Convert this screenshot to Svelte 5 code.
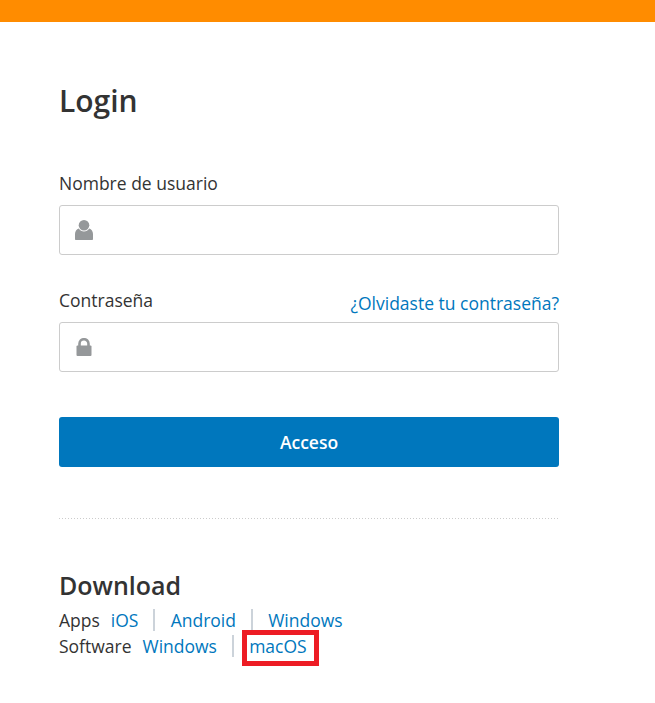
<script lang="ts">
  const apps = ["iOS", "Android", "Windows"];
  const software = ["Windows", "macOS"];
</script>

<div class="topbar"></div>

<main class="page">
  <h1>Login</h1>

  <form class="form" on:submit|preventDefault>
    <div class="field">
      <div class="label-row">
        <label for="user">Nombre de usuario</label>
      </div>
      <div class="input-wrap">
        <svg class="icon" viewBox="0 0 18 20" width="18" height="20" aria-hidden="true">
          <circle cx="9" cy="5.300" r="5.300" fill="#95989a" />
          <path d="M1 20c-.6 0-1-.4-1-1v-5c0-2.600 1.500-4.700 3.800-5.500C5 10.400 6.800 11.400 9 11.400s4-1 5.200-2.900c2.300.8 3.800 2.900 3.800 5.500v5c0 .6-.4 1-1 1z" fill="#95989a" />
        </svg>
        <input id="user" type="text" />
      </div>
    </div>

    <div class="field second">
      <div class="label-row">
        <label for="pass">Contraseña</label>
        <a href="#forgot" class="forgot">¿Olvidaste tu contraseña?</a>
      </div>
      <div class="input-wrap">
        <svg class="icon lock" viewBox="0 0 16 18" width="16" height="18" aria-hidden="true">
          <path d="M3.500 8V5.700a4.500 4.500 0 0 1 9 0V8" fill="none" stroke="#95989a" stroke-width="2.600" />
          <rect x="0.500" y="7.500" width="15" height="10.500" rx="1" fill="#95989a" />
        </svg>
        <input id="pass" type="password" />
      </div>
    </div>

    <button type="submit">Acceso</button>
  </form>

  <hr />

  <section class="download">
    <h2>Download</h2>
    <div class="links">
      <span class="kind">Apps</span>
      {#each apps as app, i}
        {#if i > 0}<span class="sep"></span>{/if}
        <a href="#app">{app}</a>
      {/each}
    </div>
    <div class="links">
      <span class="kind">Software</span>
      {#each software as item, i}
        {#if i > 0}<span class="sep"></span>{/if}
        <a href="#software" class:marked={item === "macOS"}>{item}</a>
      {/each}
    </div>
  </section>
</main>

<style>
  :global(body) {
    background: #fff;
    font-family: "Open Sans", "Noto Sans", sans-serif;
    color: #333;
  }

  .topbar {
    height: 22px;
    background: #ff8c00;
  }

  .page {
    width: 500px;
    padding: 55px 0 36px 59px;
  }

  h1 {
    margin: 0;
    font-size: 30px;
    line-height: 48px;
    font-weight: 600;
    color: #333;
  }

  .form {
    margin-top: 47px;
  }

  .second {
    margin-top: 34px;
  }

  .label-row {
    display: flex;
    justify-content: space-between;
    align-items: flex-end;
    height: 24px;
    margin-bottom: 9px;
  }

  label {
    font-size: 17.5px;
    line-height: 22px;
    margin-bottom: 2px;
    color: #333;
  }

  a {
    color: #0077bd;
    text-decoration: none;
  }

  .forgot {
    font-size: 17.5px;
    line-height: 24px;
    position: relative;
    top: 2px;
  }

  .input-wrap {
    display: flex;
    align-items: center;
    height: 50px;
    box-sizing: border-box;
    border: 1px solid #ccc;
    border-radius: 3px;
    padding-left: 15px;
    gap: 12px;
  }

  .icon {
    flex: none;
  }

  .lock {
    margin-left: 1px;
    margin-right: 1px;
  }

  input {
    flex: 1;
    min-width: 0;
    height: 100%;
    border: 0;
    outline: 0;
    background: transparent;
    font: inherit;
  }

  button {
    display: block;
    width: 100%;
    height: 50px;
    margin-top: 45px;
    border: 0;
    border-radius: 3px;
    background: #0077bd;
    color: #fff;
    font-family: inherit;
    font-size: 17.5px;
    font-weight: 600;
  }

  hr {
    height: 1px;
    margin: 51px 0 0;
    border: 0;
    background: repeating-linear-gradient(90deg, #ccc 0 1px, transparent 1px 3px);
  }

  .download {
    margin-top: 48px;
  }

  h2 {
    margin: 0;
    font-size: 25px;
    line-height: 36px;
    font-weight: 600;
    color: #333;
  }

  .links {
    display: flex;
    align-items: center;
    height: 26px;
    font-size: 17.5px;
    line-height: 26px;
  }

  .links:first-of-type {
    margin-top: 4px;
  }

  .kind {
    margin-right: 11px;
  }

  .sep {
    width: 2px;
    height: 22px;
    margin: 0 15.4px 0 14.8px;
    background: #ccd3da;
  }

  .marked {
    position: relative;
  }

  .marked::after {
    content: "";
    position: absolute;
    left: -7px;
    right: -12px;
    top: -3px;
    bottom: -7px;
    border: 5px solid #ed1c24;
  }
</style>
